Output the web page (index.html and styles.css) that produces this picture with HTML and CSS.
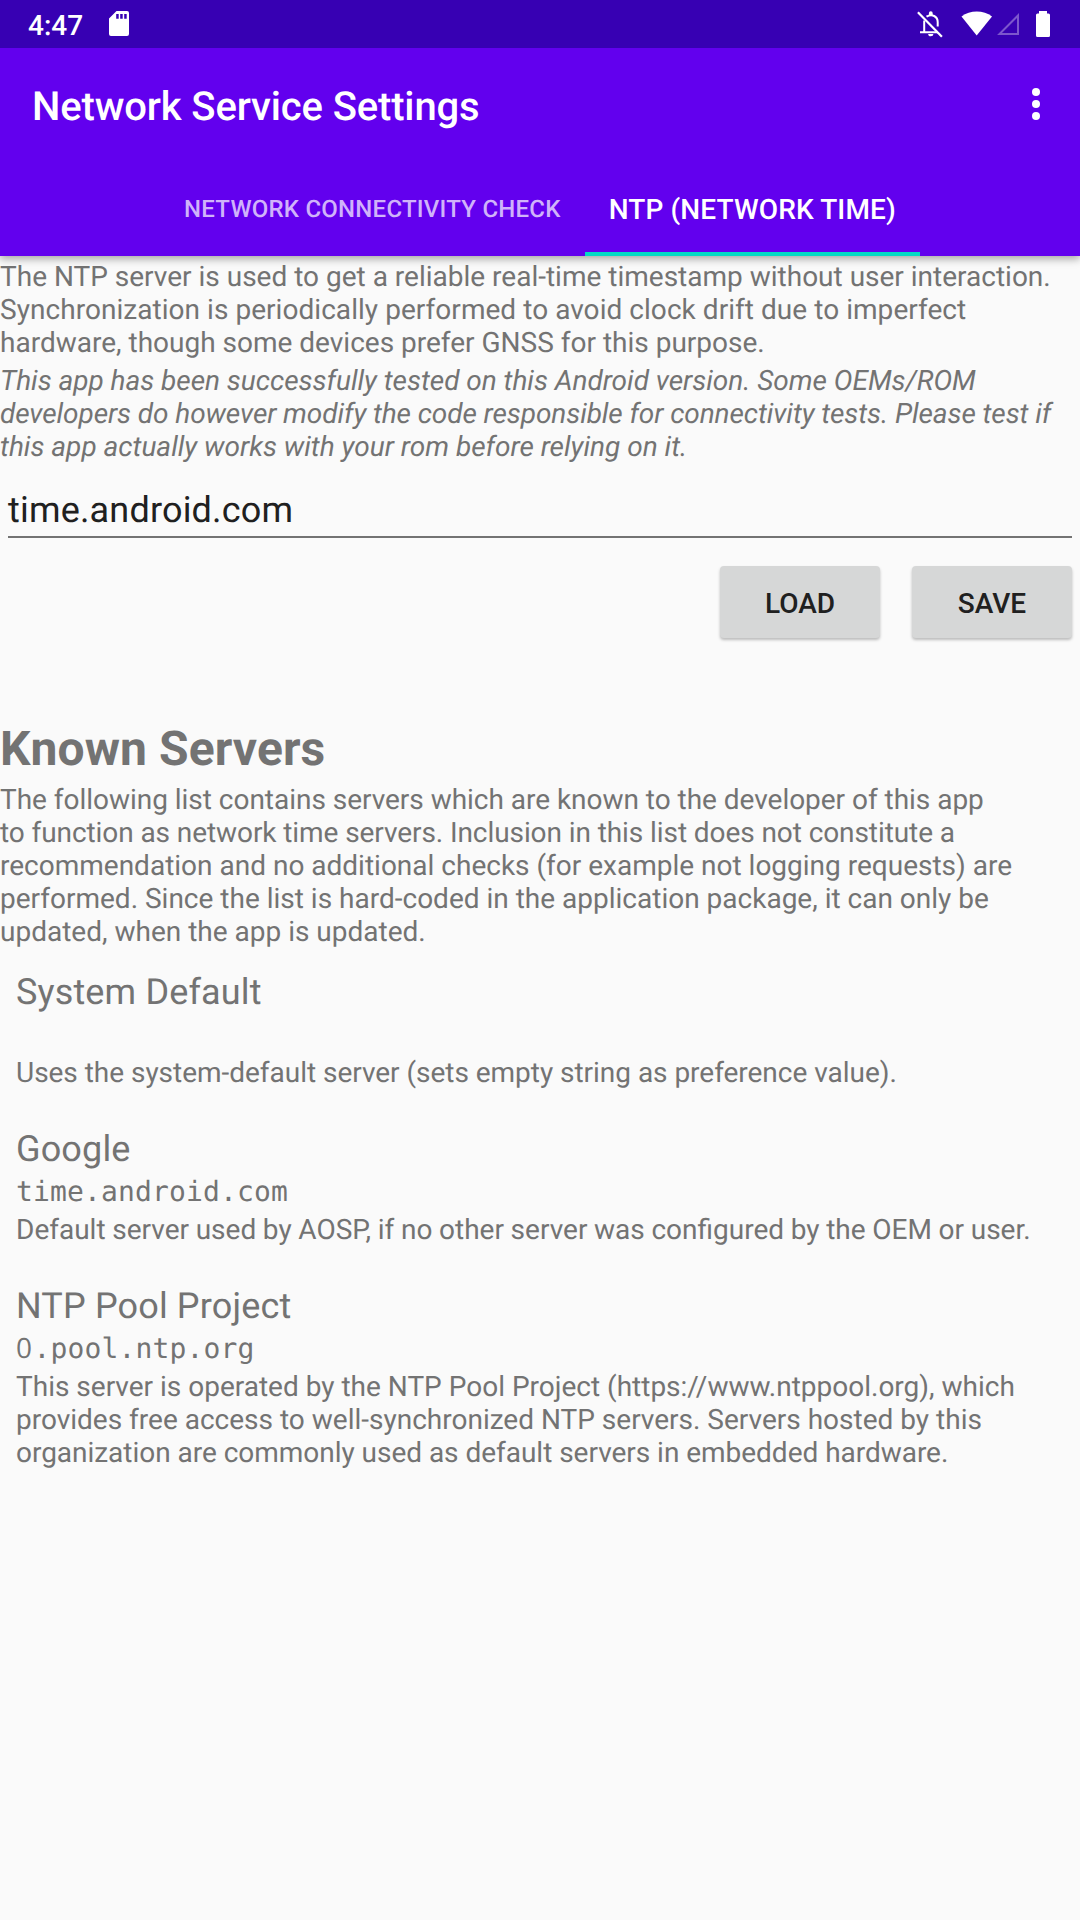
FILE: index.html
```html
<!DOCTYPE html>
<html lang="en">
<head>
<meta charset="utf-8">
<title>Network Service Settings</title>
<link rel="stylesheet" href="styles.css">
</head>
<body>
<header class="top">
  <div class="status">
    <span class="clock">4:47</span>
    <svg class="sd" width="20" height="25" viewBox="0 0 20 25"><path fill="#fff" fill-rule="evenodd" d="M7.5 0H18a2 2 0 0 1 2 2v21a2 2 0 0 1-2 2H2a2 2 0 0 1-2-2V7.500zM7.200 3v4.700h2.500V3zm4 0v4.700h2.500V3zm4 0v4.700h2.500V3z"/></svg>
    <svg class="bell" width="26" height="27" viewBox="0 0 26 27" fill="none" stroke="#fff" stroke-width="2"><path d="M3 21.300h18M7.200 20.500V9.500M9.500 5.700C15 2.200 20.700 5.500 20.700 11.200V15.500"/><path d="M.900 1.200l24 24.500" stroke-width="2.200"/><path fill="#fff" stroke="none" d="M11.900 4.500V2.200a1.900 1.900 0 0 1 3.800 0v2.300zM11.200 23h5.200a2.600 2.300 0 0 1-5.200 0z"/></svg>
    <svg class="wifi" width="32" height="25" viewBox="0 0 32 25"><path fill="#fff" d="M15.700 24.500L.5 5.400C9 -1.300 22.500-1.300 31 5.400z"/></svg>
    <svg class="cell" width="23" height="23" viewBox="0 0 23 23"><path fill="none" stroke="#7c56cc" stroke-width="2" d="M21 2.500V21H2.500z"/></svg>
    <svg class="battery" width="14" height="26" viewBox="0 0 14 26"><path fill="#fff" d="M3 0h8v2.500h1.500A1.500 1.500 0 0 1 14 4v20.500a1.500 1.500 0 0 1-1.500 1.500h-11A1.500 1.500 0 0 1 0 24.500V4a1.500 1.500 0 0 1 1.500-1.500H3z"/></svg>
  </div>
  <div class="appbar">
    <h1 class="title">Network Service Settings</h1>
    <svg class="more" width="8" height="32" viewBox="0 0 8 32" fill="#fff"><circle cx="4" cy="4" r="4"/><circle cx="4" cy="16" r="4"/><circle cx="4" cy="28" r="4"/></svg>
  </div>
  <nav class="tabs">
    <div class="tab">NETWORK CONNECTIVITY CHECK</div>
    <div class="tab active">NTP (NETWORK TIME)</div>
  </nav>
</header>
<main class="content">
  <p class="text">The NTP server is used to get a reliable real-time timestamp without user interaction.<br><span class="loose">Synchronization is periodically performed to avoid clock drift due to imperfect</span><br>hardware, though some devices prefer GNSS for this purpose.</p>
  <p class="text note"><span class="snug">This app has been successfully tested on this Android version. Some OEMs/ROM</span><br><span class="tight">developers do however modify the code responsible for connectivity tests. Please test if</span><br>this app actually works with your rom before relying on it.</p>
  <div class="field">time.android.com</div>
  <div class="actions">
    <button class="button">LOAD</button>
    <button class="button">SAVE</button>
  </div>
  <h2 class="heading">Known Servers</h2>
  <p class="text"><span class="snug">The following list contains servers which are known to the developer of this app</span><br><span class="tight">to function as network time servers. Inclusion in this list does not constitute a</span><br>recommendation and no additional checks (for example not logging requests) are<br>performed. Since the list is hard-coded in the application package, it can only be<br>updated, when the app is updated.</p>
  <ul class="servers">
    <li class="server">
      <h3 class="name">System Default</h3>
      <div class="host"></div>
      <p class="text snug">Uses the system-default server (sets empty string as preference value).</p>
    </li>
    <li class="server">
      <h3 class="name">Google</h3>
      <div class="host">time.android.com</div>
      <p class="text close-words">Default server used by AOSP, if no other server was configured by the OEM or user.</p>
    </li>
    <li class="server">
      <h3 class="name">NTP Pool Project</h3>
      <div class="host"><span class="zero">0</span>.pool.ntp.org</div>
      <p class="text">This server is operated by the NTP Pool Project (https://www.ntppool.org), which<br>provides free access to well-synchronized NTP servers. Servers hosted by this<br><span class="snug">organization are commonly used as default servers in embedded hardware.</span></p>
    </li>
  </ul>
</main>
</body>
</html>
```
FILE: styles.css
```css
* { box-sizing: border-box; margin: 0; padding: 0; }

body {
  width: 1080px;
  min-height: 1920px;
  background: #fafafa;
  color: #737373;
  font: 28px/33px Roboto, sans-serif;
  text-rendering: geometricPrecision;
}

.top {
  position: relative;
  height: 256px;
  background: #6200ee;
  box-shadow: 0 3px 8px rgba(0, 0, 0, .34);
}

.status {
  display: flex;
  align-items: flex-start;
  height: 48px;
  padding: 0 30px 0 28px;
  background: #3700b3;
}

.clock {
  width: 81px;
  padding-top: 9px;
  color: #fff;
  font-weight: 500;
}

.sd { margin-top: 11px; }
.bell { margin: 11px 0 0 auto; }
.wifi { margin: 11px 0 0 18px; }
.cell { margin: 13px 0 0 4px; }
.battery { margin: 11px 0 0 16px; }

.appbar {
  display: flex;
  align-items: center;
  justify-content: space-between;
  height: 112px;
  padding: 0 40px 0 32px;
}

.title {
  padding-top: 5px;
  color: #fff;
  font-size: 40px;
  line-height: 47px;
  font-weight: 500;
  letter-spacing: -.14px;
}

.tabs {
  display: flex;
  justify-content: center;
  height: 96px;
}

.tab {
  padding: 35px 24px 0;
  color: #d0b3fa;
  font-size: 24px;
  line-height: 28px;
  font-weight: 500;
  letter-spacing: .23px;
  white-space: nowrap;
}

.tab.active {
  padding-top: 33px;
  border-bottom: 4px solid #03dac5;
  color: #fff;
  font-size: 28px;
  line-height: 33px;
  letter-spacing: .13px;
}

.content { padding-top: 4px; }
.text { white-space: nowrap; }

.note {
  margin-top: 5px;
  font-style: italic;
}

.loose { letter-spacing: .046px; }
.snug { letter-spacing: -.028px; }
.tight { letter-spacing: -.083px; }
.close-words { word-spacing: -.28px; }

.field {
  height: 75px;
  margin: 0 8px;
  padding-top: 26px;
  border-bottom: 2px solid #737373;
  color: #202020;
  font-size: 36px;
  line-height: 42px;
  letter-spacing: .18px;
}

.actions {
  display: flex;
  justify-content: flex-end;
  gap: 32px;
  padding: 28px 8px 0 0;
}

.button {
  width: 160px;
  height: 72px;
  padding-top: 2px;
  border: 0;
  border-radius: 4px;
  background: #d6d7d7;
  box-shadow: 0 2px 3px rgba(0, 0, 0, .25);
  color: #202020;
  font: 500 28px/33px Roboto, sans-serif;
}

.heading {
  margin: 83px 0 6px;
  font-size: 48px;
  line-height: 56px;
  font-weight: 700;
  letter-spacing: .1px;
}

.servers {
  display: flex;
  flex-direction: column;
  gap: 39px;
  padding: 23px 16px 0;
  list-style: none;
}

.name {
  font-size: 36px;
  line-height: 42px;
  font-weight: 400;
  letter-spacing: .15px;
}

.host {
  height: 33px;
  margin: 5px 0;
  font-family: "DejaVu Sans Mono", monospace;
  letter-spacing: .15px;
}

.zero {
  display: inline-block;
  width: 17.4px;
  font-family: "Open Sans", sans-serif;
  line-height: 1;
}
```
